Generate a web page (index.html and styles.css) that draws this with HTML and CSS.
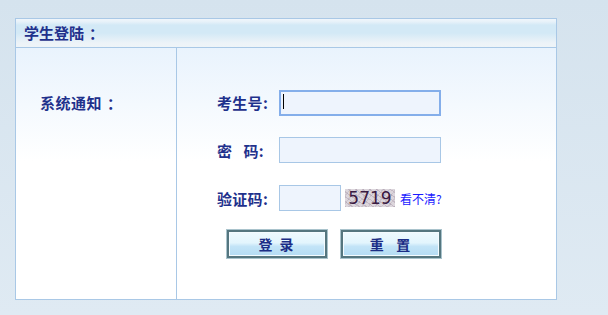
FILE: index.html
```html
<!DOCTYPE html>
<html lang="zh-CN">
<head>
<meta charset="utf-8">
<title>学生登陆</title>
<link rel="stylesheet" href="styles.css">
</head>
<body>
<div class="panel">
  <div class="panel-head">学生登陆<span class="colon">：</span></div>
  <div class="panel-body">
    <div class="notice">
      <div class="notice-title">系统通知<span class="colon">：</span></div>
    </div>
    <form class="login">
      <div class="row">
        <label class="lbl">考生号:</label>
        <span class="field-wrap">
          <input class="field focused" type="text">
          <span class="caret"></span>
        </span>
      </div>
      <div class="row">
        <label class="lbl">密&nbsp;&nbsp;&nbsp;码:</label>
        <input class="field" type="password">
      </div>
      <div class="row">
        <label class="lbl">验证码:</label>
        <input class="field short" type="text">
        <span class="captcha">5719</span>
        <a class="refresh" href="#">看不清?</a>
      </div>
      <div class="row buttons">
        <button type="button" class="btn">登&nbsp;录</button>
        <button type="button" class="btn">重&nbsp;&nbsp;置</button>
      </div>
    </form>
  </div>
</div>
</body>
</html>
```
FILE: styles.css
```css
html, body {
  margin: 0;
  padding: 0;
}
body {
  width: 608px;
  height: 315px;
  background: linear-gradient(#d5e3ee, #dfeaf3);
  font-family: "Noto Sans CJK SC", "DejaVu Sans", sans-serif;
  overflow: hidden;
}
.panel {
  margin: 18px 0 0 15px;
  width: 540px;
  height: 280px;
  border: 1px solid #a9c8e6;
  display: flex;
  flex-direction: column;
}
.panel-head {
  height: 28px;
  border-bottom: 1px solid #a9c8e6;
  background: linear-gradient(#f0f6fb 0px, #e6f1f9 3px, #d3e9f6 6px, #d3e9f6 14px, #edf3f8 24px, #eef4f8 28px);
  font-size: 15px;
  font-weight: bold;
  color: #1f318c;
  line-height: 28px;
  padding-left: 8px;
}
.colon {
  margin-left: 5px;
}
.panel-body {
  flex: 1;
  display: flex;
  background: linear-gradient(#e9f3fd, #ffffff 45%);
}
.notice {
  width: 161px;
  border-right: 1px solid #a9c8e6;
  padding: 45px 0 0 24px;
  box-sizing: border-box;
}
.notice-title {
  font-size: 15px;
  font-weight: bold;
  color: #1f318c;
  line-height: 20px;
  letter-spacing: 0.5px;
}
.login {
  padding: 41px 0 0 40px;
  display: flex;
  flex-direction: column;
  gap: 22px;
}
.row {
  display: flex;
  align-items: center;
  height: 26px;
}
.lbl {
  width: 62px;
  font-size: 15px;
  font-weight: bold;
  color: #1f318c;
  letter-spacing: 0.3px;
}
.field-wrap {
  position: relative;
  display: inline-block;
}
.field {
  box-sizing: border-box;
  width: 162px;
  height: 26px;
  margin: 0;
  border: 1px solid #a8c7e6;
  background: #eef4fd;
  padding: 0 4px;
  outline: none;
  font-size: 13px;
}
.field.focused {
  border: 2px solid #84aeea;
}
.caret {
  position: absolute;
  left: 4px;
  top: 6px;
  width: 1px;
  height: 15px;
  background: #000;
}
.field.short {
  width: 62px;
}
.captcha {
  margin-left: 4px;
  width: 50px;
  height: 18px;
  background:
    repeating-linear-gradient(35deg, rgba(150,130,150,0.35) 0 1px, transparent 1px 4px),
    repeating-linear-gradient(-50deg, rgba(170,160,175,0.35) 0 1px, transparent 1px 5px),
    #dcd6dc;
  color: #3a1a42;
  font-family: "DejaVu Sans", sans-serif;
  font-size: 17px;
  line-height: 18px;
  text-align: center;
  letter-spacing: 0;
}
.refresh {
  margin-left: 5px;
  font-size: 12px;
  color: #1a1aff;
  text-decoration: none;
}
.buttons {
  height: 28px;
  padding-left: 10px;
  gap: 14px;
  margin-top: -3px;
}
.btn {
  box-sizing: border-box;
  width: 100px;
  height: 28px;
  margin: 0;
  padding: 0;
  border: 2px solid #55767f;
  box-shadow: inset 0 0 0 1px #f4fbff, 0 0 0 1px #a9c3cc;
  background: linear-gradient(#eefaff 0%, #e3f5fd 45%, #c3e4f7 60%, #b4dcf4 100%);
  font-family: "Noto Sans CJK SC", sans-serif;
  font-size: 14px;
  font-weight: bold;
  color: #1a2d86;
  letter-spacing: 2px;
  cursor: pointer;
}
```
